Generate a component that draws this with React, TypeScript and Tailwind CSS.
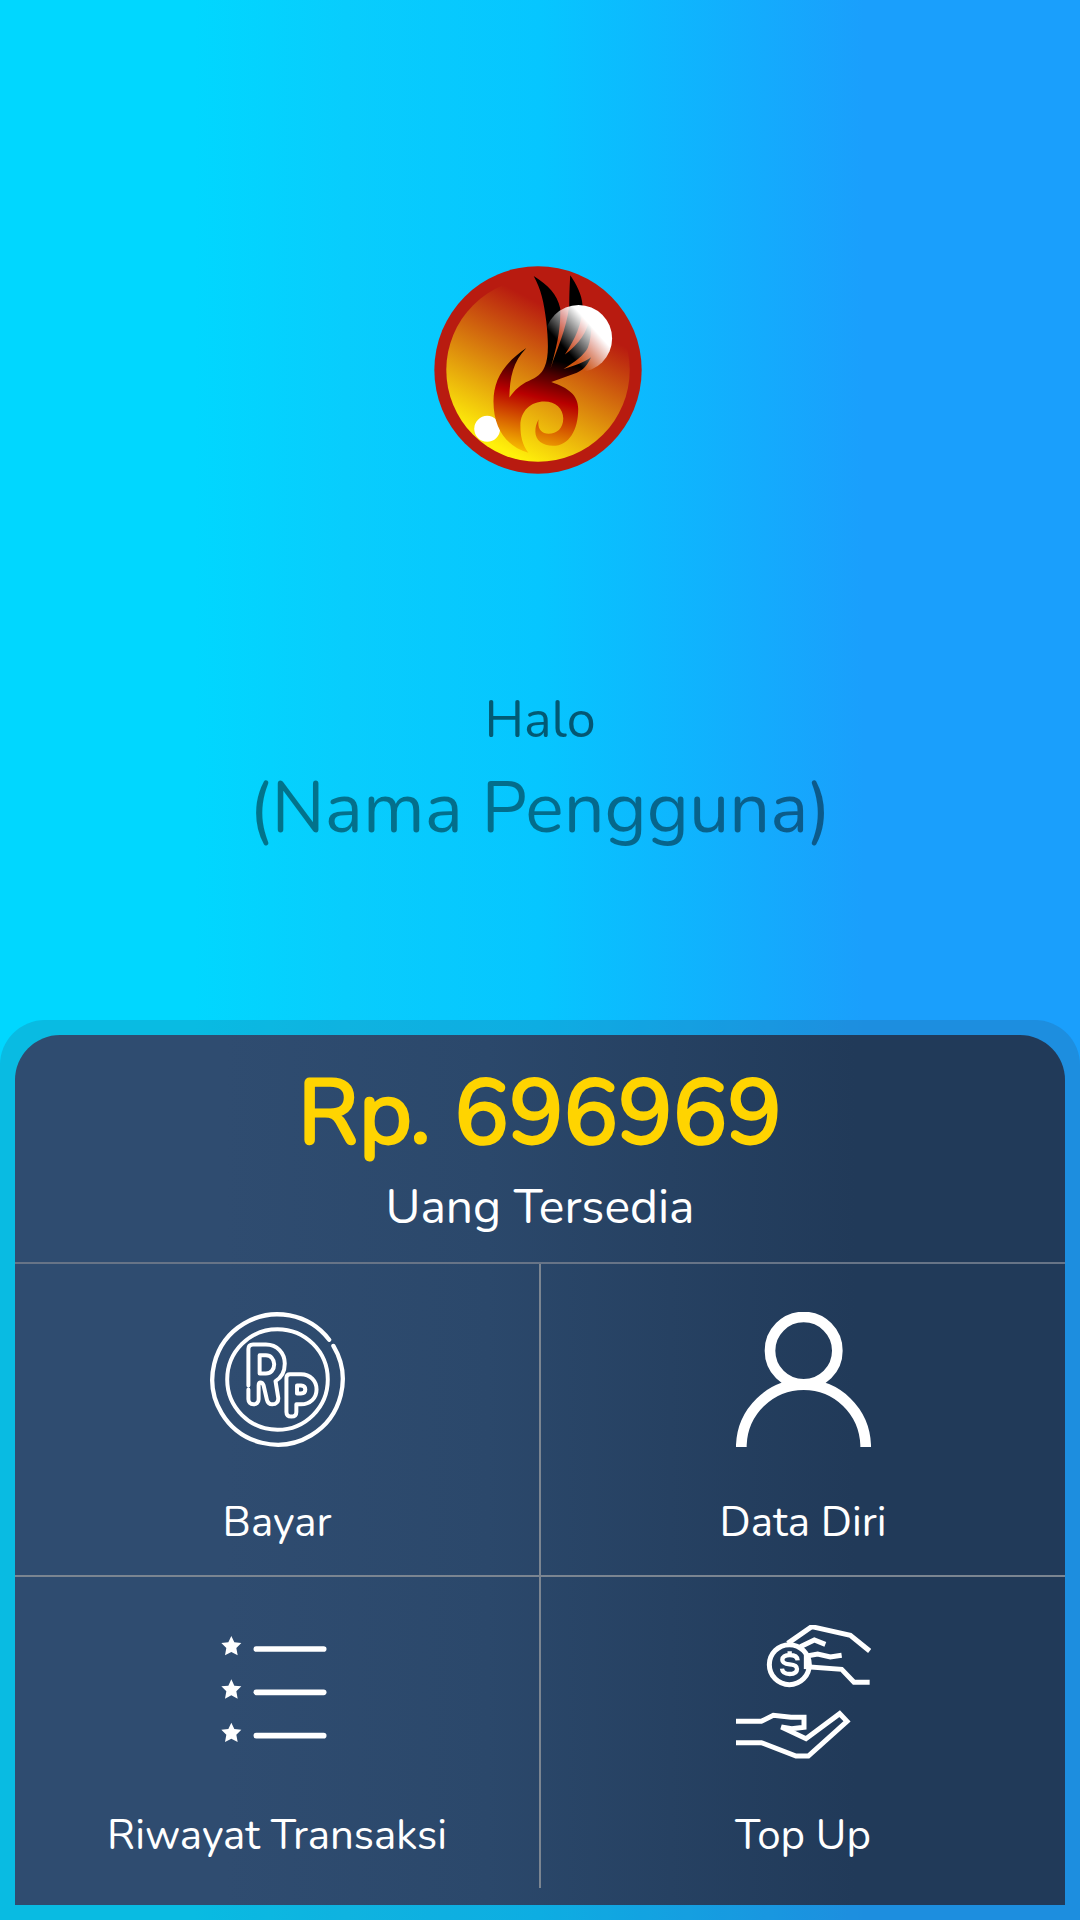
import React from "react";

function PhoenixLogo() {
  return (
    <svg viewBox="40 32 638 626" className="h-52 w-[212px]" role="img" aria-label="Logo">
      <defs>
        <linearGradient id="ball" gradientUnits="userSpaceOnUse" x1="260" y1="590" x2="461" y2="197">
          <stop offset="0" stopColor="#fff00a" />
          <stop offset="1" stopColor="#b81b10" />
        </linearGradient>
        <linearGradient id="bird" gradientUnits="userSpaceOnUse" x1="385" y1="285" x2="310" y2="600">
          <stop offset="0.08" stopColor="#000" />
          <stop offset="0.22" stopColor="#500000" />
          <stop offset="0.45" stopColor="#b80000" />
          <stop offset="1" stopColor="#fbc800" />
        </linearGradient>
        <linearGradient id="shine" gradientUnits="userSpaceOnUse" x1="440" y1="288" x2="518" y2="218">
          <stop offset="0" stopColor="#fff" stopOpacity="0" />
          <stop offset="1" stopColor="#fff" />
        </linearGradient>
      </defs>
      <circle cx="353" cy="345" r="312" fill="#b81b10" />
      <circle cx="353" cy="345" r="276" fill="url(#ball)" />
      <circle cx="200" cy="522" r="39" fill="#fff" />
      <path
        fill="url(#bird)"
        d="M318 279C250 325 219 375 219 440C219 525 262 577 324 594C306 570 300 545 300 512C300 468 332 440 372 440C406 440 429 462 429 491C429 521 409 537 385 537C361 537 350 519 355 493C347 508 345 517 345 531C345 557 367 573 398 573C447 573 474 524 474 462C474 420 444 399 393 381L470 353C494 343 503 326 513 307C489 324 462 332 430 342C466 319 490 302 503 278C514 250 515 210 512 178C500 235 477 266 434 298C465 252 487 205 487 150C485 118 469 88 450 60C448 95 447 120 447 150C440 220 408 285 391 340C409 277 422 222 420 160C410 115 384 90 340 62C362 102 371 140 378 200C385 265 385 310 373 335C363 358 350 366 325 378C301 388 283 405 267 428C268 366 278 320 318 279Z"
      />
      <circle cx="475" cy="250" r="101" fill="url(#shine)" />
    </svg>
  );
}

function RupiahIcon() {
  return (
    <svg viewBox="29 34 408 408" className="size-[135px]" fill="none" stroke="#fff" strokeWidth="12" strokeLinecap="round" strokeLinejoin="round" aria-hidden="true">
      <circle cx="233" cy="238" r="197" strokeWidth="13" strokeDasharray="1213 25" transform="rotate(-31 233 238)" />
      <circle cx="233" cy="238" r="152" />
      <path d="M145 256V146Q145 132 159 132H198C232 132 255 158 255 190C255 214 244 233 227 243L235 292C237 305 229 313 217 313C208 313 203 307 201 299L191 256Q188 247 181 247Q176 248 176 256V298C176 307 169 313 160 313C151 313 145 307 145 298V268" />
      <path d="M179 165H198C213 165 223 177 223 192C223 208 213 220 198 220H179Z" />
      <path d="M271 222H304C332 222 351 242 351 268C351 294 332 313 304 313H290V336Q290 350 275 350Q260 350 260 336V233Q260 222 271 222Z" />
      <path d="M292 256H304Q317 257 317 268Q317 280 304 280H292Z" />
    </svg>
  );
}

function PersonIcon() {
  return (
    <svg viewBox="45 36 405 405" className="size-[135px]" fill="none" stroke="#fff" strokeWidth="32" aria-hidden="true">
      <circle cx="248" cy="152" r="101" />
      <path d="M61 441V435C65 334 147 254 248 254S430 334 434 435V441" />
    </svg>
  );
}

function HistoryIcon() {
  return (
    <svg viewBox="30 45 405 405" className="size-[135px]" aria-hidden="true">
      {[117, 247, 377].map((y) => (
        <g key={y} transform={`translate(94 ${y})`}>
          <path fill="#fff" d="M0-39L9-20L30-18L15-3L19 19L0 9L-19 19L-15-3L-30-18L-9-20Z" />
          <path stroke="#fff" strokeWidth="17" strokeLinecap="round" d="M75 0H277" />
        </g>
      ))}
    </svg>
  );
}

function HandsIcon() {
  return (
    <svg viewBox="45 45 405 405" className="size-[135px]" fill="none" stroke="#fff" strokeWidth="15" aria-hidden="true">
      <circle cx="205" cy="164" r="60" />
      <path d="M200 100L272 50L388 76L446 123" />
      <path d="M238 110L280 90L313 103" />
      <path d="M362 136L328 141L290 132L256 138V170L362 178L399 217H446" />
      <path strokeWidth="13" d="M230 151C229 139 220 135 206 135C192 135 184 141 184 149C184 160 194 162 206 163C220 164 228 168 228 177C228 187 219 192 206 192C191 192 184 187 183 176M206 124V136M206 190V198" />
      <path d="M45 334H121L157 316L210 322H249V352L212 356L181 351L255 386L356 311L378 334L262 438H225L121 398H45" />
    </svg>
  );
}

const actions = [
  { label: "Bayar", Icon: RupiahIcon },
  { label: "Data Diri", Icon: PersonIcon },
  { label: "Riwayat Transaksi", Icon: HistoryIcon },
  { label: "Top Up", Icon: HandsIcon },
];

export default function App() {
  return (
    <main className="flex min-h-screen flex-col bg-[linear-gradient(90deg,#00d7ff_18%,#08cdfd_32%,#06c6ff_50%,#1a9ffc_80%)] font-['Nunito','Open_Sans',sans-serif]">
      <header className="flex flex-1 flex-col items-center pt-[266px] text-center">
        <PhoenixLogo />
        <p className="mt-[210px] text-[52px] leading-[72px] text-black/55">Halo</p>
        <h1 className="mt-1 text-[72px] leading-[96px] text-black/45">(Nama Pengguna)</h1>
      </header>
      <section className="rounded-t-[45px] bg-[#2f4c70]/20 p-[15px]">
        <div className="rounded-t-[45px] bg-[linear-gradient(90deg,#2f4c70_20%,#2b486b_45%,#213a59_80%)] pb-[17px] text-center text-white">
          <div className="border-b-2 border-[#677487] pt-[22px] pb-[19px]">
            <p className="text-[91px] leading-[112px] text-[#ffd400] [-webkit-text-stroke:3px_#ffd400]">Rp. 696969</p>
            <p className="mt-0.5 text-[48px] leading-[72px]">Uang Tersedia</p>
          </div>
          <nav className="grid grid-cols-2">
            {actions.map(({ label, Icon }, i) => (
              <button
                key={label}
                type="button"
                className={`flex flex-col items-center border-[#7b8591] pt-12 pb-6 text-[42px] leading-14 ${i % 2 ? "border-l" : "border-r"} ${i < 2 ? "border-b-2" : ""}`}
              >
                <Icon />
                <span className="mt-12">{label}</span>
              </button>
            ))}
          </nav>
        </div>
      </section>
    </main>
  );
}
